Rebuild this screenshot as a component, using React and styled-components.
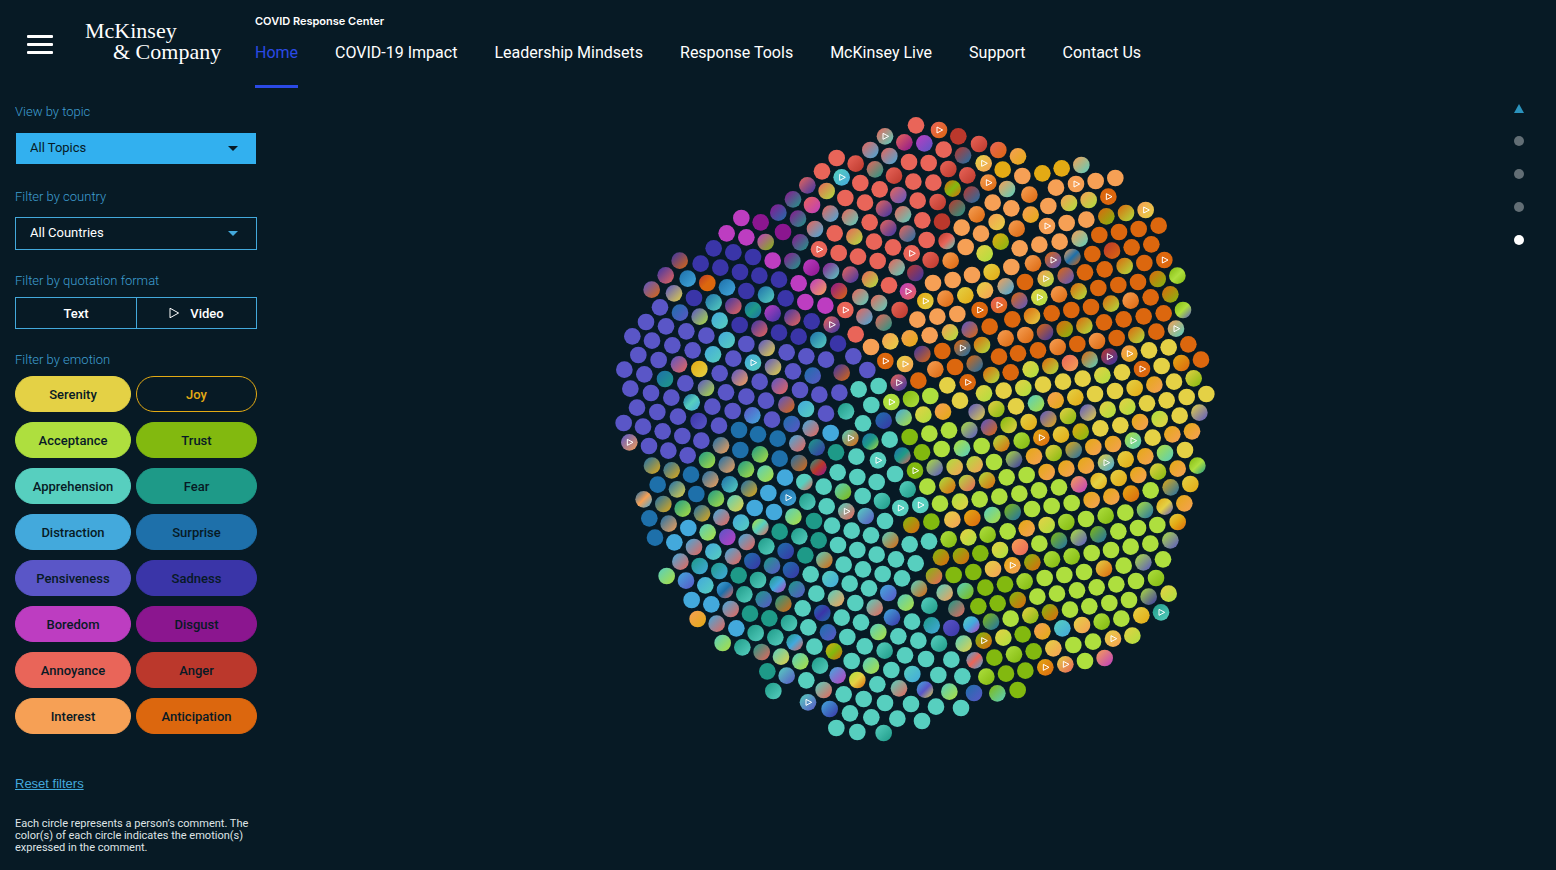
import React from 'react';
import styled, { createGlobalStyle } from 'styled-components';

const palette = {
  y: '#e4d145', j: '#e3aa14', a: '#aedf3e', t: '#82b90f',
  p: '#57cfbf', f: '#1e9a88', d: '#43a9dc', s: '#1e70aa',
  v: '#5a56c7', n: '#3a35a8', b: '#bd3dc1', g: '#8b168f',
  r: '#e96559', x: '#bb382c', i: '#f6a055', c: '#dc670e',
};

const ink = '#071a25';
const accent = '#43a9dc';

const GlobalStyle = createGlobalStyle`
  *, *::before, *::after { box-sizing: border-box; }
  body {
    margin: 0;
    background: ${ink};
    color: #fff;
    font-family: Roboto, "Liberation Sans", sans-serif;
  }
  button, select { font: inherit; color: inherit; }
`;

/* Comment bubbles by map sector: "x,y,emotions", "*" marks a video quote. */
const sectors = [
  { x: 0, y: 0, dots: `394,324,b 452,337,g 505,308,gs 549,268,gf 592,226,rn 564,326,gf 350,370,b 409,382,b 467,396,bt 519,366,g 571,397,gf 547,453,gf 311,415,n 370,427,n 429,441,n 488,452,b 272,461,n 331,473,n 390,486,n 448,497,n 507,509,n 566,520,b 209,452,nc 167,496,nr 125,539,vc 233,506,sd 292,519,xcc 351,532,sd 409,543,n 468,554,sp 527,565,n 586,576,b 192,550,vy 252,564,n 311,577,sp 370,588,nr 429,600,sfs 150,592,v` },
  { x: 600, y: 0, dots: `318,46,r 387,60,rc* 445,79,x 225,79,rp* 283,97,rg 343,100,bv 181,120,rd 401,119,r 507,102,rx 565,120,rc 80,144,r 137,161,rx 238,138,rd 297,156,r 356,159,r 459,136,xs 521,160,yi* 36,184,r 95,202,pd* 195,178,rf 415,177,rx 578,179,j 252,197,rx 472,196,rx 151,219,r 310,215,r 370,218,r 428,236,ctc 535,218,ic* 591,237,ip 50,243,ra 209,238,r 265,255,rv 485,254,xs 106,264,r 165,278,r 323,272,r 383,276,rx 548,278,i 6,285,rb 222,296,rn 441,294,xf 500,313,ic 61,311,rd 120,322,rp 279,313,rp 179,337,r 337,331,r 396,335,x 455,353,i 560,336,iy 235,354,rn 292,371,rs 15,357,rd 74,370,r 133,380,ra 192,395,r 350,390,r 410,393,xrp 467,411,i 513,371,i 572,395,jt 27,418,r* 86,429,r 144,440,r 249,412,r 305,430,r* 362,450,rx 422,452,ic 524,430,ya 203,453,r 4,473,bg 63,483,gp 121,494,rn 180,508,ra 260,472,rp 316,489,xn 369,519,i 428,510,i 486,495,i 545,486,yj 25,531,bi 87,543,gc 237,526,r 294,544,br* 346,573,jy* 406,566,ic 466,556,yj 525,541,yi 587,529,id 151,561,rp 207,579,rp 269,600,rx 46,587,b 106,600,r* 509,600,c* 567,585,rc*` },
  { x: 1200, y: 0, dots: `24,139,ij 37,198,i 97,190,j 155,175,j 214,165,ip 138,233,i 198,222,i* 257,213,i 316,204,i 58,254,ic 115,288,i 177,279,ia 236,270,ia 295,260,c* 4,295,i 62,314,ij 289,319,ct 348,309,ca 407,300,iy* 20,356,ic 111,348,i* 170,339,i 229,329,i 268,375,c 327,366,c 386,357,c 446,347,c 29,415,i 88,404,i 149,395,i 209,386,ip 4,471,i 69,460,ic 129,450,cv* 187,441,isc 247,432,c 306,422,xc 365,412,c 424,403,c 463,450,c* 45,516,c 107,506,ia* 167,497,cv 225,487,c 284,478,c 344,468,ca 403,459,c 443,507,ct 502,497,tat 325,525,c 384,516,c 265,534,c 206,544,ca 147,553,ic 88,562,ya* 28,572,cv 422,562,c 481,553,ct 519,600,tav 303,581,ca 362,572,ic 243,591,c 184,600,c` },
  { x: 0, y: 600, dots: `210,8,sv 269,20,va 329,32,dp 389,45,n 448,56,nr 488,10,bn 547,23,nr 507,68,n 566,80,n 108,36,v 168,49,v 229,64,v 289,77,v 350,90,dp 409,102,v 470,114,vy 530,127,v 589,139,v 67,79,v 126,92,v 187,106,v 248,121,v 309,133,dp 370,146,v 429,158,dp* 489,171,vy 549,184,v 85,135,v 146,150,v 207,163,vr 268,177,jy 329,190,v 389,203,vi 449,215,v 509,228,vr 570,240,v 43,179,v 103,193,v 165,207,sf 226,220,v 288,234,va 348,247,v 409,260,v 468,272,v 529,284,vc 588,297,dp 61,236,v 123,249,v 184,263,v 245,277,spd 307,290,v 368,303,v 427,316,vd 486,329,v 545,342,sv 81,293,v 142,306,v 204,320,v 266,333,nv 327,347,v 387,360,s 444,373,s 503,386,s 562,400,dr 41,339,v 99,350,v 158,364,v 217,378,v 274,392,v 333,406,si 391,420,s 450,433,fa 509,446,s 567,459,sc 58,397,vi* 117,408,v 175,422,v 233,436,v 291,450,fa 350,464,si 408,478,fa 466,491,pa 525,503,d 583,516,ppr 126,467,sj 185,481,sj 243,494,s 301,508,si 359,523,sp 417,536,sj 475,549,d 534,563,sd* 592,575,fp 143,524,s 201,538,sy 259,552,s 318,566,fa 376,580,py 434,594,d 101,568,sid 160,582,sj 218,596,fa` },
  { x: 600, y: 600, dots: `5,34,n 65,44,rn* 137,73,r 25,90,sp 84,101,n 163,20,rd 221,38,rf 322,29,i 382,20,i 442,12,i 183,111,i 241,94,iy 299,85,ij 359,76,i 420,67,ia 479,59,vc 539,50,c 587,85,ic 48,149,v 130,139,v 172,180,v 226,153,c* 285,162,yi* 337,132,nc 397,123,c 457,114,cs* 516,105,ca 567,140,c 376,178,ic 435,171,c 494,161,cs 8,197,sv 95,188,nc 146,238,p 206,228,p 266,218,rn* 325,212,c 412,226,y 473,217,c* 544,195,ca 28,254,v 88,248,v 184,285,p 244,276,a* 303,267,ta 361,258,a 450,272,y 522,250,ya 581,242,y 48,311,v 108,304,fp 159,340,p 221,332,sn 281,323,da 340,314,ya 399,305,ij 500,306,vy 559,297,yt 2,355,dr 62,369,d 121,384,pc* 181,395,sfa 239,389,p 299,381,t 358,371,a 417,361,a 478,360,av 537,352,vc 596,345,ty 20,412,fn 78,427,f 139,440,p 204,451,p* 277,437,sfr 336,427,t 395,417,a 456,415,ap 515,408,a 574,400,ac 25,472,fxg 83,487,p 255,492,p 315,482,t* 374,473,av 434,471,ai 494,463,ai 552,456,a 41,530,p 142,501,p 200,516,p 99,545,pt 158,558,p 293,538,pf 352,530,a 412,526,ac 471,519,ar 531,511,ac 590,502,a 50,589,p 216,573,pf 271,594,p* 331,585,p* 390,581,a 450,575,ay 509,568,a 568,560,a` },
  { x: 1200, y: 600, dots: `7,28,c 2,187,c 18,289,y 66,18,cy 125,10,c 282,37,c 341,28,c 401,19,c 461,10,c 223,47,ca 164,57,ct 105,66,cn 46,75,ic 498,56,ip* 439,65,c 379,75,ca 320,84,c 261,93,ic 202,102,c 143,111,ic 84,121,c 24,130,c 535,103,c 476,112,y 417,121,y 358,131,ij* 298,140,xn* 239,149,cp 180,159,ri 121,168,ca 62,178,ya 573,149,c 514,159,jc 455,168,y 396,177,c* 336,187,y 277,196,ya 218,206,y 159,215,y 99,224,y 40,234,ya 551,205,yt 492,215,y 433,224,ji 374,234,yj 315,243,y 255,252,y 196,262,yj 137,271,ij 78,280,pa 589,252,y 530,261,y 470,271,y 411,280,y 352,290,ya 293,299,ya 234,308,vy 174,318,yt 115,327,vj 56,336,yj 568,308,yv 509,317,y 449,327,ay 390,336,ji 331,346,y 271,355,y 212,365,jt 153,374,yj 94,383,jc* 35,392,at 546,364,ji 487,373,ji 428,383,y 369,392,ap* 309,402,ji 250,411,ji 191,420,js 131,429,yt 72,439,ji 12,448,an 525,420,y 465,429,ap 406,439,ji 347,448,yj 288,458,yd* 228,467,ji 169,476,ji 110,486,ji 50,495,a 503,476,ji 444,485,yt 385,495,ji 326,504,yj 266,513,jyj 207,523,ib 147,532,a 87,541,a 28,551,a 562,467,taf 541,522,yj 482,532,js 422,541,a 363,551,jc 304,560,ji 245,570,ji 185,579,a 125,588,a 66,597,a 523,580,ji 464,590,jyv 405,600,as` },
  { x: 0, y: 1200, dots: `118,25,s 176,41,si 235,54,d 293,67,pa 352,81,vb 410,96,dr 334,22,dr 276,10,sj 393,38,dp 451,51,apr 492,6,d 550,20,pa 509,65,f 568,79,fp 135,83,s 193,97,d 252,111,dr 310,125,dp 369,139,dr 427,153,sn 469,109,fp 527,123,sn 586,136,f 211,155,dr 269,168,fd 328,183,fd 386,196,f 444,210,fp 486,167,fv 543,180,sn 170,198,pa 228,212,dv 286,226,dp 345,240,dsr 403,253,fp 461,268,fv 503,223,fdb 560,238,fv 245,270,d 304,283,d 362,297,dr 420,311,f 478,325,f 520,281,fc 578,295,p 263,327,ij 320,341,dr 379,355,d 437,369,fp 496,382,fp 537,339,fp 595,352,p 338,399,pa 397,412,fp 455,426,fr 513,440,py 554,397,fdr 571,454,pa 472,484,f 530,497,pv 589,511,p 490,543,fp 594,577,pv*` },
  { x: 600, y: 1200, dots: `12,33,f 26,91,f 2,193,p 19,251,p 37,309,sns 13,410,p 30,467,fp 109,4,pr* 167,18,pv 225,33,p 66,47,p 125,62,p 183,76,p 304,45,tc 364,35,t 427,29,yi 487,24,jc 547,15,pa 84,105,p 142,120,p 241,90,pc 299,103,p 357,94,p 416,88,at 475,82,ya 533,74,at 593,64,a 43,150,pc 101,164,p 159,178,p 200,134,p 258,148,p 317,160,p 393,142,tc 453,138,tc 511,130,t 570,120,ya 61,207,pd 119,221,p 218,192,p 276,205,p 372,198,tr 431,195,t 490,186,t 549,177,yi 177,235,p 235,249,dv 327,236,pc 404,248,pi 466,243,pt 526,233,t 585,223,t 78,265,pi 136,279,p 287,278,pa 358,287,pf 439,296,fr 505,289,t 563,280,t 194,293,pr 95,323,p 153,337,p 246,322,dn 306,335,p 365,346,fd 424,354,vn 484,344,pdb 543,335,ts 54,367,sv 112,381,p 205,366,pa 265,379,p 325,392,p 387,401,pf 461,401,py 521,392,tc* 580,383,ya 72,424,jtc 164,409,p 125,453,p 224,422,pf 285,436,p 348,447,p 424,449,p 494,451,drd 553,443,t 183,467,pa 83,496,db 142,510,ayc 244,480,p 307,492,pd 385,495,p 457,499,p 529,500,at 588,491,t 202,523,p 41,540,pr 101,553,p 161,567,p 267,535,pr 345,539,dvy 418,545,pa 492,549,sv 562,550,tp 225,579,p 303,582,p 378,590,p 453,594,p 59,597,dn 120,610,p 184,622,p 262,626,p 336,633,p 79,654,p 142,666,p 221,669,pf` },
  { x: 1200, y: 1200, dots: `8,6,ts 50,55,ji 110,45,ya 169,36,at 228,27,a 287,17,at 346,8,a 503,36,yjc 30,111,ir 88,101,a 147,92,ts 206,83,av 265,73,ts 325,64,a 384,54,a 442,45,a 7,166,ji* 67,157,tc 126,148,at 185,139,at 245,129,a 303,120,a 362,110,a 421,101,a 481,91,av 44,214,at 104,204,a 163,195,a 222,186,a 282,176,yc 341,167,a 400,157,av 459,148,a 23,270,tc 82,260,a 141,251,a 201,241,a 260,232,a 319,223,a 378,213,a 438,204,at 2,326,a 61,316,yt 120,307,tc 180,299,a 238,289,a 298,279,a 357,270,a 416,260,an 476,251,ya 38,373,t 97,364,ij 157,355,pd 216,345,yi 275,335,at 334,326,a 394,316,yj 453,307,fp* 12,433,at 71,424,t 130,415,yi 190,405,a 249,395,a 309,386,yi* 367,377,ya 46,482,t 106,472,jc* 166,463,yr* 225,453,a 284,444,ib 23,540,t` },
];

const bubbles = sectors.flatMap((sector) =>
  sector.dots.split(' ').map((entry) => {
    const [x, y, mark] = entry.split(',');
    return {
      x: sector.x + Number(x),
      y: sector.y + Number(y),
      mix: mark.replace('*', ''),
      video: mark.endsWith('*'),
    };
  })
);

const blends = [...new Set(bubbles.map((b) => b.mix).filter((m) => m.length > 1))];

const Page = styled.div`
  min-height: 100vh;
  background: ${ink};
`;

const Header = styled.header`
  display: flex;
  height: 88px;
`;

const MenuButton = styled.button`
  display: flex;
  flex-direction: column;
  align-self: center;
  gap: 5px;
  margin-left: 27px;
  padding: 0;
  border: 0;
  background: none;
  cursor: pointer;
`;

const MenuBar = styled.span`
  width: 26px;
  height: 3px;
  border-radius: 1px;
  background: #fff;
`;

const Logo = styled.a`
  display: flex;
  flex-direction: column;
  width: 170px;
  margin-left: 32px;
  padding-top: 20px;
  color: #fff;
  font-family: "Liberation Serif", serif;
  font-size: 22px;
  line-height: 21px;
  text-decoration: none;
  white-space: nowrap;
`;

const LogoIndent = styled.span`
  padding-left: 28px;
`;

const HeaderMain = styled.div`
  display: flex;
  flex-direction: column;
  padding-top: 14px;
`;

const SiteTitle = styled.div`
  font-family: Inter, sans-serif;
  font-size: 11px;
  font-weight: 600;
  line-height: 14px;
`;

const Nav = styled.nav`
  display: flex;
  gap: 37px;
`;

const NavLink = styled.a`
  padding: 15px 0 22px;
  border-bottom: 3px solid ${(p) => (p.$active ? '#2b4ae6' : 'transparent')};
  color: ${(p) => (p.$active ? '#2b4ae6' : '#fff')};
  font-size: 16px;
  line-height: 20px;
  text-decoration: none;
  white-space: nowrap;
`;

const Body = styled.div`
  display: grid;
  grid-template-columns: 274px minmax(0, 1fr);
`;

const Sidebar = styled.aside`
  padding: 16px 17px 0 15px;
`;

const Field = styled.div`
  display: flex;
  flex-direction: column;
  gap: ${(p) => (p.$compact ? 8 : 12)}px;
  &:not(:first-child) { margin-top: ${(p) => (p.$compact ? 23 : 24)}px; }
`;

const Label = styled.label`
  color: #3f9fd2;
  font-size: 13px;
  font-weight: 300;
  line-height: 16px;
`;

const SelectBox = styled.div`
  display: grid;
  grid-template-columns: 1fr 28px;
  align-items: center;
  height: 33px;
  border: 1px solid ${(p) => (p.$filled ? ink : accent)};
  background: ${(p) => (p.$filled ? '#32b0ef' : ink)};
  color: ${(p) => (p.$filled ? ink : '#fff')};
`;

const Select = styled.select`
  grid-area: 1 / 1 / 2 / 3;
  height: 31px;
  padding: 0 14px 2px;
  border: 0;
  appearance: none;
  background: transparent;
  font-size: 13px;
  cursor: pointer;
`;

const Caret = styled.svg`
  grid-area: 1 / 2;
  width: 10px;
  height: 5px;
  pointer-events: none;
  fill: ${(p) => (p.$filled ? ink : accent)};
`;

const Segments = styled.div`
  display: grid;
  grid-template-columns: 1fr 1fr;
  height: 32px;
  border: 1px solid ${accent};
`;

const Segment = styled.button`
  display: flex;
  align-items: center;
  justify-content: center;
  gap: 10px;
  padding: 0;
  border: 0;
  background: none;
  font-size: 13px;
  font-weight: 500;
  cursor: pointer;
  & + & { border-left: 1px solid ${accent}; }
`;

const Pills = styled.div`
  display: grid;
  grid-template-columns: 116fr 121fr;
  gap: 10px 5px;
`;

const Pill = styled.button`
  height: 36px;
  padding: 0;
  border: 1px solid ${(p) => p.$color};
  border-radius: 18px;
  background: ${(p) => (p.$outline ? 'transparent' : p.$color)};
  color: ${(p) => (p.$outline ? p.$color : ink)};
  font-size: 13px;
  font-weight: 500;
  cursor: pointer;
`;

const Reset = styled.button`
  display: block;
  margin-top: 42px;
  padding: 0;
  border: 0;
  background: none;
  color: ${accent};
  font-family: "Liberation Sans", sans-serif;
  font-size: 13px;
  line-height: 16px;
  text-decoration: underline;
  cursor: pointer;
`;

const Note = styled.p`
  margin: 26px 0 0;
  color: #dfe4e6;
  font-size: 11px;
  line-height: 12px;
`;

const Main = styled.main`
  display: grid;
  grid-template-columns: 1fr minmax(0, 610px) 1fr;
  align-items: start;
`;

const BubbleMap = styled.svg`
  grid-column: 2;
  width: 100%;
  margin-top: 22px;
`;

const Pager = styled.nav`
  display: flex;
  flex-direction: column;
  justify-self: end;
  gap: 23px;
  margin: 15px 32px 0 0;
`;

const PagerUp = styled.button`
  display: flex;
  height: 10px;
  padding: 0;
  border: 0;
  background: none;
  cursor: pointer;
`;

const PagerDot = styled.button`
  width: 10px;
  height: 10px;
  padding: 0;
  border: 0;
  border-radius: 50%;
  background: ${(p) => (p.$active ? '#fff' : '#626e75')};
  cursor: pointer;
`;

const links = ['Home', 'COVID-19 Impact', 'Leadership Mindsets', 'Response Tools', 'McKinsey Live', 'Support', 'Contact Us'];

const emotions = [
  ['Serenity', 'y'], ['Joy', 'j'], ['Acceptance', 'a'], ['Trust', 't'],
  ['Apprehension', 'p'], ['Fear', 'f'], ['Distraction', 'd'], ['Surprise', 's'],
  ['Pensiveness', 'v'], ['Sadness', 'n'], ['Boredom', 'b'], ['Disgust', 'g'],
  ['Annoyance', 'r'], ['Anger', 'x'], ['Interest', 'i'], ['Anticipation', 'c'],
];

function Dropdown({ id, label, value, filled }) {
  return (
    <Field>
      <Label htmlFor={id}>{label}</Label>
      <SelectBox $filled={filled}>
        <Select id={id}><option>{value}</option></Select>
        <Caret $filled={filled} viewBox="0 0 10 5" aria-hidden="true"><path d="M0 0h10L5 5z" /></Caret>
      </SelectBox>
    </Field>
  );
}

function Chart() {
  return (
    <BubbleMap viewBox="0 0 1830 1920" role="img" aria-label="Comments by emotion">
      <defs>
        {blends.map((mix) => (
          <linearGradient key={mix} id={`mix-${mix}`} x1="0" y1="0" x2="1" y2="1">
            {[...mix].map((k, n) => (
              <stop key={n} offset={n / (mix.length - 1)} stopColor={palette[k]} />
            ))}
          </linearGradient>
        ))}
      </defs>
      {bubbles.map((b) => (
        <g key={`${b.x}-${b.y}`}>
          <circle cx={b.x} cy={b.y} r="25" fill={b.mix.length > 1 ? `url(#mix-${b.mix})` : palette[b.mix]} />
          {b.video && (
            <path
              d={`M${b.x - 6} ${b.y - 9}v18l17 -9z`}
              fill="none" stroke="#fff" strokeWidth="3" strokeLinejoin="round"
            />
          )}
        </g>
      ))}
    </BubbleMap>
  );
}

export default function App() {
  return (
    <Page>
      <GlobalStyle />
      <Header>
        <MenuButton aria-label="Menu"><MenuBar /><MenuBar /><MenuBar /></MenuButton>
        <Logo href="#"><span>McKinsey</span><LogoIndent>&amp; Company</LogoIndent></Logo>
        <HeaderMain>
          <SiteTitle>COVID Response Center</SiteTitle>
          <Nav>
            {links.map((text, n) => <NavLink key={text} href="#" $active={n === 0}>{text}</NavLink>)}
          </Nav>
        </HeaderMain>
      </Header>
      <Body>
        <Sidebar>
          <Dropdown id="topic" label="View by topic" value="All Topics" filled />
          <Dropdown id="country" label="Filter by country" value="All Countries" />
          <Field $compact>
            <Label as="span" id="format">Filter by quotation format</Label>
            <Segments role="group" aria-labelledby="format">
              <Segment>Text</Segment>
              <Segment>
                <svg width="11" height="12" viewBox="0 0 11 12" fill="none" stroke="#fff" aria-hidden="true">
                  <path d="M1 1.2v9.6L9.6 6z" />
                </svg>
                Video
              </Segment>
            </Segments>
          </Field>
          <Field $compact>
            <Label as="span" id="emotion">Filter by emotion</Label>
            <Pills role="group" aria-labelledby="emotion">
              {emotions.map(([name, key]) => (
                <Pill key={key} $color={palette[key]} $outline={key === 'j'}>{name}</Pill>
              ))}
            </Pills>
          </Field>
          <Reset>Reset filters</Reset>
          <Note>Each circle represents a person’s comment. The color(s) of each circle indicates the emotion(s) expressed in the comment.</Note>
        </Sidebar>
        <Main>
          <Chart />
          <Pager aria-label="Sections">
            <PagerUp aria-label="Previous">
              <svg width="10" height="10" viewBox="0 0 10 10" fill="#2b93bd" aria-hidden="true"><path d="M5 1l5 9H0z" /></svg>
            </PagerUp>
            <PagerDot aria-label="Section 1" />
            <PagerDot aria-label="Section 2" />
            <PagerDot aria-label="Section 3" />
            <PagerDot aria-label="Section 4" $active />
          </Pager>
        </Main>
      </Body>
    </Page>
  );
}
